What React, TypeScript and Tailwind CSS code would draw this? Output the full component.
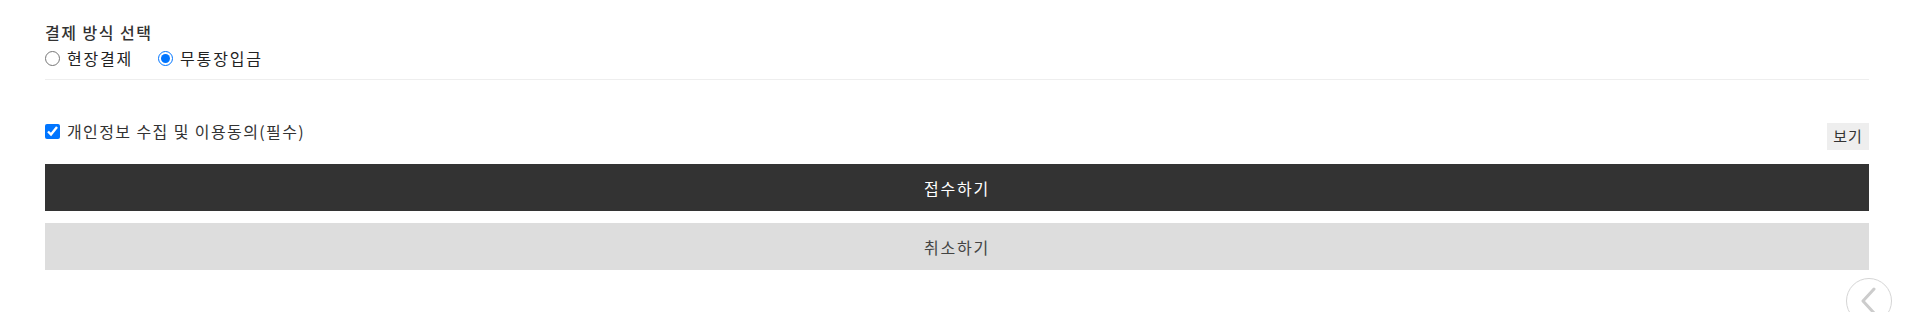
import React from "react";

export default function App() {
  return (
    <div
      className="relative h-[312px] w-full overflow-hidden bg-white text-[#222]"
      style={{ fontFamily: '"Noto Sans CJK KR", "Noto Sans", sans-serif' }}
    >
      <div className="pl-[45px] pr-[39px] pt-[22px]">
        <div className="border-b border-[#eeeeee] pb-[9px]">
          <h3 className="text-[16px] leading-[20px] font-medium tracking-[1.5px] text-[#333]">결제 방식 선택</h3>
          <div className="mt-[4px] flex h-[24px] items-center text-[16px] tracking-[1.8px]">
            <label className="flex items-center">
              <input type="radio" name="pay" className="m-0 h-[15px] w-[15px] accent-[#0075ff]" />
              <span className="ml-[7px]">현장결제</span>
            </label>
            <label className="ml-[25px] flex items-center">
              <input type="radio" name="pay" defaultChecked className="m-0 h-[15px] w-[15px] accent-[#0075ff]" />
              <span className="ml-[7px]">무통장입금</span>
            </label>
          </div>
        </div>

        <div className="mt-[42px] flex items-start justify-between">
          <label className="flex h-[18px] items-center text-[16px] tracking-[1.4px] text-[#333]">
            <input type="checkbox" defaultChecked className="m-0 h-[15px] w-[15px] accent-[#0075ff]" />
            <span className="ml-[7px]">개인정보 수집 및 이용동의(필수)</span>
          </label>
          <button className="mt-[1px] flex h-[27px] w-[42px] items-center justify-center bg-[#eeeeee] text-[15px] tracking-[1px] text-[#333]">
            보기
          </button>
        </div>

        <button className="mt-[14px] flex h-[47px] w-full items-center justify-center bg-[#333333] text-[16px] tracking-[1.8px] text-white">
          접수하기
        </button>
        <button className="mt-[12px] flex h-[47px] w-full items-center justify-center bg-[#dddddd] text-[16px] tracking-[1.8px] text-[#444]">
          취소하기
        </button>
      </div>

      <div className="absolute left-[1846px] top-[278px] h-[46px] w-[46px] rounded-full border border-[#d5d5d5] bg-white">
        <svg width="44" height="44" viewBox="0 0 44 44" className="block">
          <path d="M27 10 L16 22 L27 34" fill="none" stroke="#cccccc" strokeWidth="3" strokeLinecap="round" strokeLinejoin="round" />
        </svg>
      </div>
    </div>
  );
}
